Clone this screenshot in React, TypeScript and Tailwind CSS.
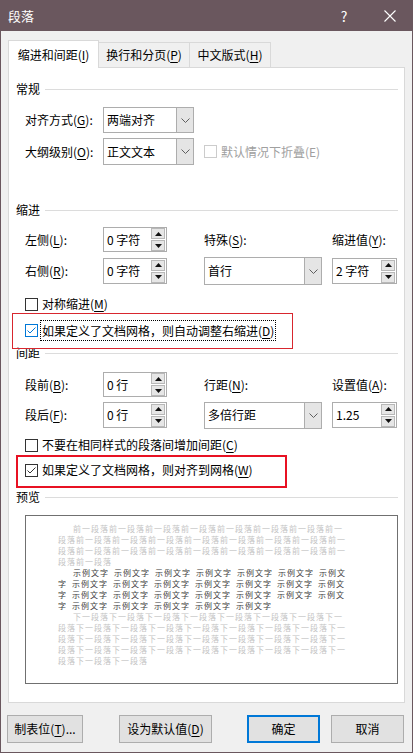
import React from "react";

const font = "font-['Noto_Sans_CJK_SC','Noto_Sans',sans-serif]";

function K({ children }: { children: React.ReactNode }) {
  return <span className="underline decoration-1 underline-offset-[2px]">{children}</span>;
}

function Chevron() {
  return (
    <svg width="9" height="5" viewBox="0 0 9 5" aria-hidden>
      <path d="M0.5 0.5 L4.5 4.5 L8.5 0.5" fill="none" stroke="#5f5f5f" strokeWidth="1" />
    </svg>
  );
}

function Select({ value, className }: { value: string; className: string }) {
  return (
    <div className={`flex border border-[#adadad] bg-white ${className}`}>
      <div className="flex flex-1 items-center pl-[3px]">{value}</div>
      <div className="flex w-[17px] items-center justify-center border-l border-[#adadad] bg-[#e5e5e5]">
        <Chevron />
      </div>
    </div>
  );
}

function Tri({ down }: { down?: boolean }) {
  return (
    <svg width="7" height="4" viewBox="0 0 7 4" aria-hidden>
      <path d={down ? "M0 0 H7 L3.5 4 Z" : "M0 4 H7 L3.5 0 Z"} fill="#111" />
    </svg>
  );
}

function Spin({ value, className }: { value: string; className: string }) {
  return (
    <div className={`flex border border-[#adadad] bg-white ${className}`}>
      <div className="flex flex-1 items-center pl-[3px]">{value}</div>
      <div className="flex flex-col justify-center gap-[1px] pr-[1px]">
        <div className="flex h-[11px] w-[14px] items-center justify-center border border-[#b8b8b8] bg-[#e6e6e6]">
          <Tri />
        </div>
        <div className="flex h-[11px] w-[14px] items-center justify-center border border-[#b8b8b8] bg-[#e6e6e6]">
          <Tri down />
        </div>
      </div>
    </div>
  );
}

function Box({ checked, tone }: { checked?: boolean; tone: "dark" | "blue" | "off" }) {
  const border = tone === "blue" ? "border-[#0078d7]" : tone === "off" ? "border-[#cccccc]" : "border-[#333333]";
  const stroke = tone === "blue" ? "#0078d7" : "#333333";
  return (
    <div className={`flex h-[13px] w-[13px] shrink-0 items-center justify-center border bg-white ${border}`}>
      {checked && (
        <svg width="11" height="11" viewBox="0 0 11 11" aria-hidden>
          <path d="M1.5 5.5 L4 8 L9.5 2.5" fill="none" stroke={stroke} strokeWidth="1" />
        </svg>
      )}
    </div>
  );
}

function Section({ title, className }: { title: string; className: string }) {
  return (
    <div className={`flex h-[16px] items-center pl-[7px] pr-[6px] ${className}`}>
      <span>{title}</span>
      <div className="ml-[5px] h-px flex-1 bg-[#dcdcdc]" />
    </div>
  );
}

function seq(unit: string, total: number, cuts: number[]) {
  let s = "";
  for (let i = 0; i < total; i++) s += unit[i % unit.length];
  const out: string[] = [];
  let p = 0;
  for (const c of cuts) {
    out.push(s.slice(p, p + c));
    p += c;
  }
  return out;
}

const before = seq("前一段落", 100, [30, 32, 32, 6]);
const after = seq("下一段落", 136, [30, 32, 32, 32, 10]);
const g = "示例文字";
const sample: string[][] = [
  [g, g, g, g, g, g, "示例文"],
  ["字", g, g, g, g, g, g, "示例文"],
  ["字", g, g, g, g, g, g, "示例文"],
  ["字", g, g, g, g, g],
];

function Preview() {
  return (
    <div className="ml-[16px] mr-[6px] mt-[10px] h-[169px] border border-[#707070] bg-white pl-[32px] pt-[7px] text-[8px] leading-[11px] tracking-[1px]">
      <div className="text-[#c4c4c4]">
        {before.map((l, i) => (
          <div key={i} className={`whitespace-nowrap ${i === 0 ? "pl-[15px]" : ""}`}>{l}</div>
        ))}
      </div>
      <div className="text-[#3c3c3c]">
        {sample.map((line, i) => (
          <div key={i} className={`flex whitespace-nowrap ${i === 0 ? "pl-[15px]" : ""}`}>
            {line.map((t, j) => (
              <span key={j} className="mr-[5px]">{t}</span>
            ))}
          </div>
        ))}
      </div>
      <div className="text-[#c4c4c4]">
        {after.map((l, i) => (
          <div key={i} className={`whitespace-nowrap ${i === 0 ? "pl-[15px]" : ""}`}>{l}</div>
        ))}
      </div>
    </div>
  );
}

function Panel() {
  return (
    <div className="relative mx-[7px] flex h-[636px] flex-col border border-[#d9d9d9] bg-white">
      <Section title="常规" className="mt-[13px]" />
      <div className="mt-[10px] flex h-[26px] items-center pl-[16px]">
        <div className="w-[78px]">对齐方式(<K>G</K>):</div>
        <Select value="两端对齐" className="h-[26px] w-[91px]" />
      </div>
      <div className="mt-[5px] flex h-[27px] items-center pl-[16px]">
        <div className="w-[78px]">大纲级别(<K>O</K>):</div>
        <Select value="正文文本" className="h-[27px] w-[91px]" />
        <div className="ml-[10px] flex items-center text-[#a0a0a0]">
          <Box tone="off" />
          <span className="ml-[4px]">默认情况下折叠(E)</span>
        </div>
      </div>

      <Section title="缩进" className="mt-[37px]" />
      <div className="mt-[9px] flex h-[25px] items-center pl-[16px]">
        <div className="w-[78px]">左侧(<K>L</K>):</div>
        <Spin value="0 字符" className="h-[25px] w-[64px]" />
        <div className="ml-[37px] w-[118px]">特殊(<K>S</K>):</div>
        <div className="ml-[10px]">缩进值(<K>Y</K>):</div>
      </div>
      <div className="mt-[6px] flex h-[26px] items-center pl-[16px]">
        <div className="w-[78px]">右侧(<K>R</K>):</div>
        <Spin value="0 字符" className="h-[26px] w-[64px]" />
        <Select value="首行" className="ml-[37px] h-[28px] w-[118px]" />
        <Spin value="2 字符" className="ml-[10px] h-[26px] w-[65px]" />
      </div>
      <div className="mt-[12px] flex h-[16px] items-center pl-[16px]">
        <Box tone="dark" />
        <span className="ml-[4px]">对称缩进(<K>M</K>)</span>
      </div>
      <div className="mt-[8px] flex h-[21px] items-center pl-[16px]">
        <Box tone="blue" checked />
        <span className="ml-[2px] flex h-[21px] items-center border border-dotted border-black px-[1px]">
          如果定义了文档网格，则自动调整右缩进(<K>D</K>)
        </span>
      </div>

      <Section title="间距" className="mt-[4px]" />
      <div className="mt-[11px] flex h-[25px] items-center pl-[16px]">
        <div className="w-[78px]">段前(<K>B</K>):</div>
        <Spin value="0 行" className="h-[25px] w-[64px]" />
        <div className="ml-[37px] w-[118px]">行距(<K>N</K>):</div>
        <div className="ml-[10px]">设置值(<K>A</K>):</div>
      </div>
      <div className="mt-[5px] flex h-[26px] items-center pl-[16px]">
        <div className="w-[78px]">段后(<K>F</K>):</div>
        <Spin value="0 行" className="h-[26px] w-[64px]" />
        <Select value="多倍行距" className="ml-[37px] h-[27px] w-[118px]" />
        <Spin value="1.25" className="ml-[10px] h-[26px] w-[65px]" />
      </div>
      <div className="mt-[9px] flex h-[16px] items-center pl-[16px]">
        <Box tone="dark" />
        <span className="ml-[4px]">不要在相同样式的段落间增加间距(<K>C</K>)</span>
      </div>
      <div className="mt-[9px] flex h-[16px] items-center pl-[16px]">
        <Box tone="dark" checked />
        <span className="ml-[4px]">如果定义了文档网格，则对齐到网格(<K>W</K>)</span>
      </div>

      <Section title="预览" className="mt-[11px]" />
      <Preview />

      {/* red annotation boxes */}
      <div className="absolute left-[3px] top-[245px] h-[36px] w-[281px] border border-[#d8262e]" />
      <div className="absolute left-[7px] top-[387px] h-[33px] w-[271px] border-2 border-[#e81123]" />
    </div>
  );
}

export default function App() {
  return (
    <div className={`flex h-[753px] w-[413px] flex-col border-x border-b border-[#6a575e] bg-[#f0f0f0] text-[12px] leading-none text-black ${font}`}>
      <div className="flex h-[31px] shrink-0 items-center bg-[#6a575e] text-white">
        <span className="pl-[7px] text-[13px]">段落</span>
        <div className="ml-auto flex w-[46px] justify-center text-[14px]">?</div>
        <div className="flex w-[45px] justify-center">
          <svg width="12" height="12" viewBox="0 0 12 12" aria-hidden>
            <path d="M0.5 0.5 L11.5 11.5 M11.5 0.5 L0.5 11.5" stroke="#fff" strokeWidth="1.1" />
          </svg>
        </div>
      </div>

      <div className="mt-[9px] flex h-[27px] items-end pl-[7px]">
        <div className="relative z-10 -mb-px flex h-[28px] w-[91px] items-center justify-center border border-b-0 border-[#d9d9d9] bg-white">
          缩进和间距(<K>I</K>)
        </div>
        <div className="flex h-[25px] w-[91px] items-center justify-center border border-b-0 border-l-0 border-[#d9d9d9]">
          换行和分页(<K>P</K>)
        </div>
        <div className="flex h-[25px] w-[81px] items-center justify-center border border-b-0 border-l-0 border-[#d9d9d9]">
          中文版式(<K>H</K>)
        </div>
      </div>

      <Panel />

      <div className="mt-[12px] flex h-[28px]">
        <button className="ml-[6px] flex h-[28px] w-[76px] items-center justify-center border border-[#adadad] bg-[#e1e1e1]">
          制表位(<K>T</K>)...
        </button>
        <button className="ml-[36px] flex h-[28px] w-[93px] items-center justify-center border border-[#adadad] bg-[#e1e1e1]">
          设为默认值(<K>D</K>)
        </button>
        <button className="ml-[35px] flex h-[28px] w-[73px] items-center justify-center border-2 border-[#0078d7] bg-[#e1e1e1]">
          确定
        </button>
        <button className="ml-[11px] flex h-[28px] w-[73px] items-center justify-center border border-[#adadad] bg-[#e1e1e1]">
          取消
        </button>
      </div>
    </div>
  );
}
